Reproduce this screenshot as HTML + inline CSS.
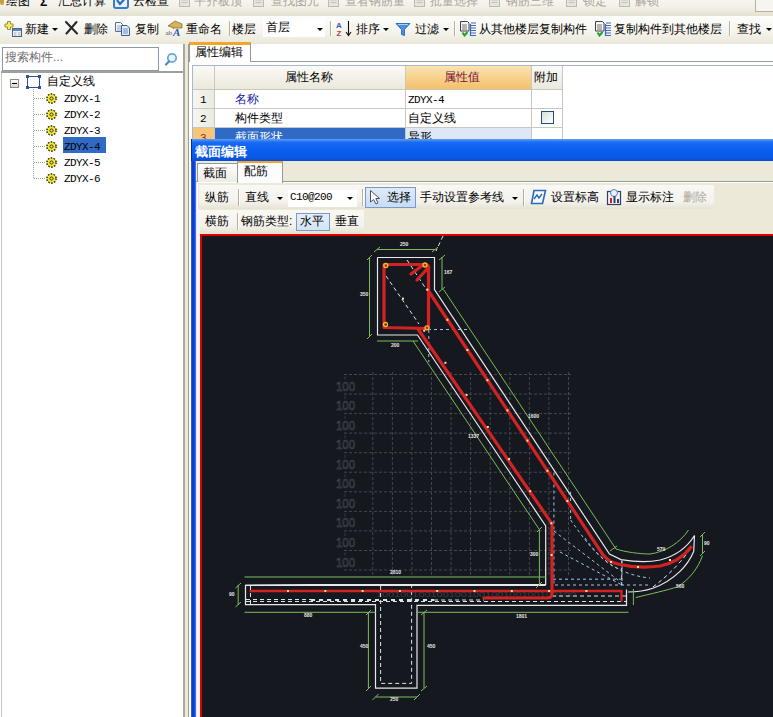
<!DOCTYPE html>
<html><head><meta charset="utf-8">
<style>
*{margin:0;padding:0;box-sizing:border-box}
html,body{width:773px;height:717px;overflow:hidden;background:#ece9d8;font-family:"Liberation Sans",sans-serif;font-size:12px;color:#000;position:relative}
.a{position:absolute;white-space:nowrap;line-height:12px}
.g{color:#a8a69a}
.m{font-family:"Liberation Mono",monospace;font-size:11px;letter-spacing:-0.6px}
.sep{position:absolute;width:2px;background:#b4b1a2;border-right:1px solid #fff}
.arr{position:absolute;width:0;height:0;border-left:3px solid transparent;border-right:3px solid transparent;border-top:3px solid #000}
#top1{left:0;top:0;width:773px;height:16px;background:linear-gradient(#f6f5ee 0,#f1efe6 50%,#e4e1d0 100%)}
#tb{left:0;top:16px;width:773px;height:28px;background:linear-gradient(#fdfdfb,#f6f5ef 50%,#ebe8d9)}
#left{left:0;top:44px;width:185px;height:673px;background:#fff;border-right:2px solid #aaa89c}
#right{left:188px;top:44px;width:585px;height:673px;background:#fff;border-left:1px solid #9d9d92}
</style></head>
<body>
<!-- top strip -->
<div id="top1" class="a"></div>
<div class="a" style="left:0;top:-5px;width:4px;height:10px;background:#c8a040;border-radius:2px"></div>
<div class="a" style="left:6px;top:-5px">绘图</div>
<div class="a" style="left:40px;top:-4px;font-weight:bold">Σ</div>
<div class="a" style="left:58px;top:-5px">汇总计算</div>
<svg class="a" style="left:113px;top:-6px" width="17" height="16" viewBox="0 0 17 16"><rect x="1" y="1" width="14" height="13" rx="2" fill="#e8f2fc" stroke="#3a7ccc" stroke-width="2"/><path d="M4,6 L7,10 L15,1" stroke="#2a6cc0" stroke-width="2.2" fill="none"/></svg>
<div class="a" style="left:133px;top:-5px">云检查</div>
<svg class="a" style="left:178px;top:-5px" width="14" height="13" viewBox="0 0 14 13"><rect x="1.5" y="1.5" width="10" height="10" fill="#e6e4dc" stroke="#bcbab0"/><path d="M3.5,5 h6 M3.5,7.5 h6" stroke="#c4c2b8"/></svg>
<div class="a g" style="left:194px;top:-5px">平齐板顶</div>
<svg class="a" style="left:252px;top:-5px" width="14" height="13" viewBox="0 0 14 13"><rect x="1.5" y="1.5" width="10" height="10" fill="#e6e4dc" stroke="#bcbab0"/><path d="M3.5,5 h6 M3.5,7.5 h6" stroke="#c4c2b8"/></svg>
<div class="a g" style="left:271px;top:-5px">查找图元</div>
<svg class="a" style="left:327px;top:-5px" width="14" height="13" viewBox="0 0 14 13"><rect x="1.5" y="1.5" width="10" height="10" fill="#e6e4dc" stroke="#bcbab0"/><path d="M3.5,5 h6 M3.5,7.5 h6" stroke="#c4c2b8"/></svg>
<div class="a g" style="left:345px;top:-5px">查看钢筋量</div>
<svg class="a" style="left:413px;top:-5px" width="14" height="13" viewBox="0 0 14 13"><rect x="1.5" y="1.5" width="10" height="10" fill="#e6e4dc" stroke="#bcbab0"/><path d="M3.5,5 h6 M3.5,7.5 h6" stroke="#c4c2b8"/></svg>
<div class="a g" style="left:430px;top:-5px">批量选择</div>
<svg class="a" style="left:488px;top:-5px" width="14" height="13" viewBox="0 0 14 13"><rect x="1.5" y="1.5" width="10" height="10" fill="#e6e4dc" stroke="#bcbab0"/><path d="M3.5,5 h6 M3.5,7.5 h6" stroke="#c4c2b8"/></svg>
<div class="a g" style="left:506px;top:-5px">钢筋三维</div>
<svg class="a" style="left:565px;top:-5px" width="14" height="13" viewBox="0 0 14 13"><rect x="1.5" y="1.5" width="10" height="10" fill="#e6e4dc" stroke="#bcbab0"/><path d="M3.5,5 h6 M3.5,7.5 h6" stroke="#c4c2b8"/></svg>
<div class="a g" style="left:583px;top:-5px">锁定</div>
<svg class="a" style="left:618px;top:-5px" width="14" height="13" viewBox="0 0 14 13"><rect x="1.5" y="1.5" width="10" height="10" fill="#e6e4dc" stroke="#bcbab0"/><path d="M3.5,5 h6 M3.5,7.5 h6" stroke="#c4c2b8"/></svg>
<div class="a g" style="left:635px;top:-5px">解锁</div>
<div class="a" style="left:755px;top:-2px;width:20px;height:14px;border:1px solid #b5b2a2;background:#f6f5f0"></div>

<!-- toolbar -->
<div id="tb" class="a"></div>
<svg class="a" style="left:4px;top:20px" width="18" height="18" viewBox="0 0 18 18">
<path d="M3.5,1.5 h3 v2.5 h2.5 v3 h-2.5 v2.5 h-3 v-2.5 h-2.5 v-3 h2.5 z" fill="#f4ec70" stroke="#9c9030" stroke-width="1"/>
<rect x="8.5" y="8.5" width="9" height="8" fill="#f2f4f8" stroke="#50627e" stroke-width="1"/>
<rect x="9" y="9" width="8" height="2" fill="#5a86c8"/>
<path d="M10,13 h2.5 M14,13 h2.5 M10,15 h2.5 M14,15 h2.5" stroke="#a0aabb" stroke-width="1"/>
</svg>
<div class="a" style="left:25px;top:23px">新建</div>
<div class="arr" style="left:52px;top:28px"></div>
<svg class="a" style="left:64px;top:20px" width="16" height="16" viewBox="0 0 16 16"><path d="M2,2 L13,13.5 M12.5,2 L2.5,13.5" stroke="#2a2a2a" stroke-width="2.1" stroke-linecap="round"/></svg>
<div class="a" style="left:84px;top:23px">删除</div>
<svg class="a" style="left:114px;top:21px" width="17" height="15" viewBox="0 0 17 15">
<path d="M1.5,1.5 h5 l2,2 v7 h-7 z" fill="#f6f8fc" stroke="#5a6e94" stroke-width="1"/>
<path d="M3,5 h4 M3,7 h4 M3,9 h4" stroke="#8ea4c8"/>
<path d="M7.5,4.5 h5.5 l2.5,2.5 v7.5 h-8 z" fill="#e4ecf8" stroke="#3a5a94" stroke-width="1"/>
<path d="M9,8 h5 M9,10 h5 M9,12 h5" stroke="#6a8cc8"/>
</svg>
<div class="a" style="left:135px;top:23px">复制</div>
<svg class="a" style="left:165px;top:20px" width="19" height="17" viewBox="0 0 19 17">
<path d="M3,6 L10,1 L17,4 L17,8 L10,8 Z" fill="#d6b45a" stroke="#8a7030" stroke-width="0.8"/>
<path d="M4,5 L9,9" stroke="#b09040"/>
<text x="0.5" y="15" font-family="Liberation Serif" font-size="7" fill="#555">ab</text>
<text x="8" y="16" font-family="Liberation Serif" font-size="11" font-style="italic" font-weight="bold" fill="#2c54b0">A</text>
</svg>
<div class="a" style="left:186px;top:23px">重命名</div>
<div class="sep" style="left:229px;top:21px;height:15px"></div>
<div class="a" style="left:232px;top:23px">楼层</div>
<div class="a" style="left:263px;top:19px;width:62px;height:18px;background:#fff"></div>
<div class="a" style="left:266px;top:21px">首层</div>
<div class="arr" style="left:317px;top:28px"></div>
<div class="sep" style="left:330px;top:21px;height:15px"></div>
<svg class="a" style="left:335px;top:20px" width="17" height="17" viewBox="0 0 17 17">
<text x="1" y="7.5" font-family="Liberation Sans" font-size="8" font-weight="bold" fill="#3a62b0">A</text>
<text x="1.5" y="16" font-family="Liberation Sans" font-size="8" font-weight="bold" fill="#b04848">Z</text>
<path d="M13.5,1 V15 M11,12 L13.5,15.5 L16,12" stroke="#111" stroke-width="1.1" fill="none"/>
</svg>
<div class="a" style="left:356px;top:23px">排序</div>
<div class="arr" style="left:383px;top:28px"></div>
<svg class="a" style="left:395px;top:22px" width="16" height="15" viewBox="0 0 16 15">
<path d="M1,1.5 H15 L9.5,7.5 V13.5 L6.5,12.5 V7.5 Z" fill="#4a90e0" stroke="#2a64b4" stroke-width="0.9"/>
<path d="M3,2.5 H13" stroke="#a8d0f8"/>
</svg>
<div class="a" style="left:415px;top:23px">过滤</div>
<div class="arr" style="left:443px;top:28px"></div>
<div class="sep" style="left:454px;top:21px;height:15px"></div>
<svg class="a" style="left:459px;top:21px" width="18" height="16" viewBox="0 0 18 16">
<path d="M1.5,0.5 h7 l1.5,1.5 v8 h-8.5 z" fill="#f8f8f8" stroke="#404040" stroke-width="1"/>
<path d="M3,4 h5 M3,6 h5 M3,8 h5" stroke="#707070"/>
<path d="M3.5,11.5 L5.5,14.5 L8.5,11" stroke="#20a030" stroke-width="2" fill="none"/>
<path d="M12,2 h5 M11.5,4.5 h5.5 M11.5,7 h5.5 M11.5,9.5 h5.5 M11.5,12 h5.5 M11.5,14.5 h5.5 M11.5,3 V15" stroke="#3a68c0" stroke-width="1.2"/>
</svg>
<div class="a" style="left:479px;top:23px">从其他楼层复制构件</div>
<svg class="a" style="left:594px;top:21px" width="18" height="16" viewBox="0 0 18 16">
<path d="M1.5,0.5 h7 l1.5,1.5 v8 h-8.5 z" fill="#f8f8f8" stroke="#404040" stroke-width="1"/>
<path d="M3,4 h5 M3,6 h5 M3,8 h5" stroke="#707070"/>
<path d="M3.5,11.5 L5.5,14.5 L8.5,11" stroke="#20a030" stroke-width="2" fill="none"/>
<path d="M12,2 h5 M11.5,4.5 h5.5 M11.5,7 h5.5 M11.5,9.5 h5.5 M11.5,12 h5.5 M11.5,14.5 h5.5 M11.5,3 V15" stroke="#3a68c0" stroke-width="1.2"/>
</svg>
<div class="a" style="left:614px;top:23px">复制构件到其他楼层</div>
<div class="sep" style="left:729px;top:21px;height:15px"></div>
<div class="a" style="left:737px;top:23px">查找</div>
<div class="arr" style="left:766px;top:28px"></div>

<!-- left panel -->
<div id="left" class="a"></div>
<div class="a" style="left:2px;top:47px;width:157px;height:24px;border:1px solid #8a98a8;background:#fff"></div>
<div class="a" style="left:5px;top:51px;color:#707070">搜索构件...</div>
<div class="a" style="left:1px;top:71px;width:182px;height:2px;background:#a0a09a"></div>
<div class="a" style="left:1px;top:73px;width:1px;height:644px;background:#c8c8c0"></div>
<svg class="a" style="left:163px;top:51px" width="16" height="16" viewBox="0 0 16 16">
<circle cx="9" cy="7" r="4.2" fill="#e8f4fc" stroke="#6aa6d8" stroke-width="1.8"/>
<path d="M6,10.5 L3,13.5" stroke="#4a88c0" stroke-width="2.2" stroke-linecap="round"/>
</svg>
<!-- tree -->
<div class="a" style="left:10px;top:79px;width:9px;height:9px;border:1px solid #8c8c8c;background:linear-gradient(#fff,#d8d8d0)"></div>
<div class="a" style="left:12px;top:83px;width:5px;height:1px;background:#000"></div>
<div class="a" style="left:27px;top:76px;width:13px;height:12px;border:1px solid #3050a0"></div>
<div class="a" style="left:26px;top:75px;width:3px;height:3px;background:#3050a0"></div>
<div class="a" style="left:38px;top:75px;width:3px;height:3px;background:#3050a0"></div>
<div class="a" style="left:26px;top:86px;width:3px;height:3px;background:#3050a0"></div>
<div class="a" style="left:38px;top:86px;width:3px;height:3px;background:#3050a0"></div>
<div class="a" style="left:47px;top:75px">自定义线</div>
<div class="a" style="left:33px;top:89px;width:1px;height:89px;border-left:1px dotted #a0a0a0"></div>
<div class="a" style="left:34px;top:98px;width:11px;height:1px;border-top:1px dotted #a0a0a0"></div>
<svg class="a" style="left:45px;top:92px" width="13" height="13" viewBox="0 0 13 13"><circle cx="6.5" cy="6.5" r="4.6" fill="#f4e838" stroke="#3a3a10" stroke-width="1.6" stroke-dasharray="1.6 1.3"/><circle cx="6.5" cy="6.5" r="3.3" fill="#f4e838"/><circle cx="6.5" cy="6.5" r="1.6" fill="none" stroke="#3a3a10" stroke-width="1"/></svg>
<div class="a m" style="left:64px;top:93px;">ZDYX-1</div>
<div class="a" style="left:34px;top:114px;width:11px;height:1px;border-top:1px dotted #a0a0a0"></div>
<svg class="a" style="left:45px;top:108px" width="13" height="13" viewBox="0 0 13 13"><circle cx="6.5" cy="6.5" r="4.6" fill="#f4e838" stroke="#3a3a10" stroke-width="1.6" stroke-dasharray="1.6 1.3"/><circle cx="6.5" cy="6.5" r="3.3" fill="#f4e838"/><circle cx="6.5" cy="6.5" r="1.6" fill="none" stroke="#3a3a10" stroke-width="1"/></svg>
<div class="a m" style="left:64px;top:109px;">ZDYX-2</div>
<div class="a" style="left:34px;top:130px;width:11px;height:1px;border-top:1px dotted #a0a0a0"></div>
<svg class="a" style="left:45px;top:124px" width="13" height="13" viewBox="0 0 13 13"><circle cx="6.5" cy="6.5" r="4.6" fill="#f4e838" stroke="#3a3a10" stroke-width="1.6" stroke-dasharray="1.6 1.3"/><circle cx="6.5" cy="6.5" r="3.3" fill="#f4e838"/><circle cx="6.5" cy="6.5" r="1.6" fill="none" stroke="#3a3a10" stroke-width="1"/></svg>
<div class="a m" style="left:64px;top:125px;">ZDYX-3</div>
<div class="a" style="left:34px;top:146px;width:11px;height:1px;border-top:1px dotted #a0a0a0"></div>
<svg class="a" style="left:45px;top:140px" width="13" height="13" viewBox="0 0 13 13"><circle cx="6.5" cy="6.5" r="4.6" fill="#f4e838" stroke="#3a3a10" stroke-width="1.6" stroke-dasharray="1.6 1.3"/><circle cx="6.5" cy="6.5" r="3.3" fill="#f4e838"/><circle cx="6.5" cy="6.5" r="1.6" fill="none" stroke="#3a3a10" stroke-width="1"/></svg>
<div class="a" style="left:63px;top:137px;width:43px;height:16px;background:#316ac5"></div>
<div class="a m" style="left:64px;top:141px;">ZDYX-4</div>
<div class="a" style="left:34px;top:162px;width:11px;height:1px;border-top:1px dotted #a0a0a0"></div>
<svg class="a" style="left:45px;top:156px" width="13" height="13" viewBox="0 0 13 13"><circle cx="6.5" cy="6.5" r="4.6" fill="#f4e838" stroke="#3a3a10" stroke-width="1.6" stroke-dasharray="1.6 1.3"/><circle cx="6.5" cy="6.5" r="3.3" fill="#f4e838"/><circle cx="6.5" cy="6.5" r="1.6" fill="none" stroke="#3a3a10" stroke-width="1"/></svg>
<div class="a m" style="left:64px;top:157px;">ZDYX-5</div>
<div class="a" style="left:34px;top:178px;width:11px;height:1px;border-top:1px dotted #a0a0a0"></div>
<svg class="a" style="left:45px;top:172px" width="13" height="13" viewBox="0 0 13 13"><circle cx="6.5" cy="6.5" r="4.6" fill="#f4e838" stroke="#3a3a10" stroke-width="1.6" stroke-dasharray="1.6 1.3"/><circle cx="6.5" cy="6.5" r="3.3" fill="#f4e838"/><circle cx="6.5" cy="6.5" r="1.6" fill="none" stroke="#3a3a10" stroke-width="1"/></svg>
<div class="a m" style="left:64px;top:173px;">ZDYX-6</div>

<!-- right panel -->
<div id="right" class="a"></div>
<div class="a" style="left:251px;top:61px;width:522px;height:1px;background:#919b9c"></div>
<div class="a" style="left:189px;top:42px;width:62px;height:20px;background:#fff;border:1px solid #919b9c;border-bottom:none;border-top:3px solid #f2a52a"></div>
<div class="a" style="left:195px;top:46px">属性编辑</div>
<!-- table -->
<div class="a" style="left:562px;top:65px;width:211px;height:1px;background:#a4b4c8"></div>
<div class="a" style="left:192px;top:65px;width:371px;height:80px;border:1px solid #a8b8d0;background:#fff"></div>
<div class="a" style="left:193px;top:66px;width:212px;height:23px;background:linear-gradient(#fbfaf6,#ebe9dc)"></div>
<div class="a" style="left:405px;top:66px;width:126px;height:23px;background:linear-gradient(#fbe3b4,#f4c06a)"></div>
<div class="a" style="left:531px;top:66px;width:31px;height:23px;background:linear-gradient(#fbfaf6,#ebe9dc)"></div>
<div class="a" style="left:193px;top:89px;width:21px;height:50px;background:linear-gradient(90deg,#f6f5ef,#ecebe2)"></div>
<div class="a" style="left:193px;top:128px;width:21px;height:12px;background:#f7c57a"></div>
<div class="a" style="left:214px;top:128px;width:191px;height:12px;background:#316ac5"></div>
<div class="a" style="left:405px;top:128px;width:126px;height:12px;background:#dde8f4"></div>
<!-- grid lines -->
<div class="a" style="left:214px;top:66px;width:1px;height:74px;background:#c8c8c0"></div>
<div class="a" style="left:405px;top:66px;width:1px;height:74px;background:#c8c8c0"></div>
<div class="a" style="left:531px;top:66px;width:1px;height:74px;background:#c8c8c0"></div>
<div class="a" style="left:562px;top:66px;width:1px;height:74px;background:#c8c8c0"></div>
<div class="a" style="left:193px;top:89px;width:369px;height:1px;background:#c8c8c0"></div>
<div class="a" style="left:193px;top:108px;width:369px;height:1px;background:#c8c8c0"></div>
<div class="a" style="left:193px;top:127px;width:369px;height:1px;background:#c8c8c0"></div>
<div class="a" style="left:285px;top:71px">属性名称</div>
<div class="a" style="left:444px;top:71px;color:#78103a">属性值</div>
<div class="a" style="left:534px;top:71px">附加</div>
<div class="a m" style="left:200px;top:94px">1</div>
<div class="a m" style="left:200px;top:113px">2</div>
<div class="a m" style="left:200px;top:132px;color:#a02020">3</div>
<div class="a" style="left:235px;top:93px;color:#1a1aa0">名称</div>
<div class="a" style="left:235px;top:112px">构件类型</div>
<div class="a" style="left:235px;top:131px;color:#fff">截面形状</div>
<div class="a m" style="left:408px;top:94px">ZDYX-4</div>
<div class="a" style="left:408px;top:112px">自定义线</div>
<div class="a" style="left:408px;top:131px">异形</div>
<div class="a" style="left:541px;top:111px;width:13px;height:13px;border:1px solid #1c5180;background:linear-gradient(135deg,#dcdcd6,#fff)"></div>

<!-- dialog -->

<div class="a" style="left:191px;top:139px;width:600px;height:600px;background:#0c4ed6;border-left:1px solid #0030a0"></div>
<div class="a" style="left:192px;top:139px;width:600px;height:22px;background:linear-gradient(#5aa0fc 0,#1a6af2 15%,#0a5ef0 50%,#0858e4 85%,#0a4cd0 100%)"></div>
<div class="a" style="left:191px;top:161px;width:5px;height:560px;background:linear-gradient(90deg,#3a6ee0,#0838c8 35%,#0a42d8 65%,#4a86f2)"></div>
<div class="a" style="left:195px;top:145px;color:#fff;font-weight:bold;font-size:13px;line-height:13px">截面编辑</div>
<div class="a" style="left:196px;top:161px;width:580px;height:560px;background:#ece9d8"></div>
<div class="a" style="left:196px;top:181px;width:580px;height:1px;background:#919b9c"></div>
<div class="a" style="left:197px;top:182px;width:580px;height:540px;background:#ece9d8;border-top:1px solid #fff;border-left:1px solid #fff"></div>
<div class="a" style="left:197px;top:163px;width:41px;height:19px;background:linear-gradient(#fff,#ecebe5);border:1px solid #919b9c;border-bottom:none"></div>
<div class="a" style="left:203px;top:167px">截面</div>
<div class="a" style="left:237px;top:161px;width:46px;height:22px;background:#fcfcfe;border:1px solid #919b9c;border-bottom:none;border-top:2px solid #f2a52a"></div>
<div class="a" style="left:244px;top:165px">配筋</div>
<!-- toolbar rows -->
<div class="a" style="left:199px;top:185px;width:515px;height:24px;background:linear-gradient(#f9f8f4,#f3f2ec 70%,#e6e3d4)"></div>
<div class="a" style="left:199px;top:210px;width:165px;height:23px;background:linear-gradient(#f9f8f4,#f3f2ec 70%,#e6e3d4)"></div>
<div class="a" style="left:205px;top:191px">纵筋</div>
<div class="sep" style="left:238px;top:189px;height:17px"></div>
<div class="a" style="left:245px;top:191px">直线</div>
<div class="arr" style="left:277px;top:197px"></div>
<div class="a" style="left:288px;top:190px;width:69px;height:17px;background:#fff"></div>
<div class="a m" style="left:290px;top:191px">C10@200</div>
<div class="arr" style="left:347px;top:197px"></div>
<div class="sep" style="left:362px;top:189px;height:17px"></div>
<div class="a" style="left:365px;top:187px;width:51px;height:21px;background:linear-gradient(#dfeaf8,#c8dcf4);border:1px solid #7a98c8"></div>
<svg class="a" style="left:369px;top:189px" width="12" height="16" viewBox="0 0 12 16"><path d="M1.5 1.5 L1.5 13 L4.5 10.5 L7 15 L9 14 L6.8 9.5 L10.5 9.5 Z" fill="#fff" stroke="#4a5060" stroke-width="1"/></svg>
<div class="a" style="left:387px;top:191px">选择</div>
<div class="a" style="left:420px;top:191px">手动设置参考线</div>
<div class="arr" style="left:512px;top:197px"></div>
<div class="sep" style="left:523px;top:189px;height:17px"></div>
<svg class="a" style="left:530px;top:189px" width="17" height="16" viewBox="0 0 17 16"><path d="M4 1.5 H15.5 L12.5 14.5 H1.5 Z" fill="#f4f8fc" stroke="#2a6ab8" stroke-width="1.6"/><path d="M4 10 L7 6 L9 9 L12 5" fill="none" stroke="#2a6ab8" stroke-width="1.4"/></svg>
<div a class="a" style="left:551px;top:191px">设置标高</div>
<svg class="a" style="left:606px;top:188px" width="16" height="18" viewBox="0 0 16 18"><rect x="1.5" y="3.5" width="13" height="13" fill="#f0f4f8" stroke="#304060" stroke-width="1.2"/><circle cx="8" cy="5" r="3.5" fill="#e8f0ff" stroke="#6080b0"/><rect x="4" y="10" width="2" height="5" fill="#d02020"/><rect x="7.5" y="8" width="2" height="7" fill="#304060"/><rect x="11" y="11" width="2" height="4" fill="#304060"/></svg>
<div class="a" style="left:626px;top:191px">显示标注</div>
<div class="a g" style="left:683px;top:191px">删除</div>
<div class="a" style="left:205px;top:215px">横筋</div>
<div class="sep" style="left:237px;top:213px;height:17px"></div>
<div class="a" style="left:241px;top:215px">钢筋类型:</div>
<div class="a" style="left:296px;top:213px;width:34px;height:18px;background:linear-gradient(#e4eef8,#d4e4f6);border:1px solid #7a98c8"></div>
<div class="a" style="left:300px;top:215px">水平</div>
<div class="a" style="left:335px;top:215px">垂直</div>
<!-- canvas -->
<div class="a" style="left:197px;top:209px;width:3px;height:510px;background:#f6f6f4"></div>
<div class="a" style="left:200px;top:234px;width:580px;height:490px;background:#e00000"></div>
<div class="a" style="left:202px;top:236px;width:580px;height:490px;background:#15181f"></div>
<!--CAD--><svg class="a" style="left:0;top:0" width="773" height="717" viewBox="0 0 773 717">
<defs><clipPath id="cv"><rect x="202" y="236" width="571" height="481"/></clipPath></defs>
<g clip-path="url(#cv)">
<g stroke="#45454d" stroke-width="1" stroke-dasharray="3 2"><line x1="344" y1="374.5" x2="571" y2="374.5"/><line x1="344" y1="394.1" x2="571" y2="394.1"/><line x1="344" y1="413.6" x2="571" y2="413.6"/><line x1="344" y1="433.1" x2="571" y2="433.1"/><line x1="344" y1="452.7" x2="571" y2="452.7"/><line x1="344" y1="472.2" x2="571" y2="472.2"/><line x1="344" y1="491.8" x2="571" y2="491.8"/><line x1="344" y1="511.4" x2="571" y2="511.4"/><line x1="344" y1="530.9" x2="571" y2="530.9"/><line x1="344" y1="550.5" x2="571" y2="550.5"/><line x1="344" y1="570.0" x2="571" y2="570.0"/><line x1="372.8" y1="372" x2="372.8" y2="576"/><line x1="392.4" y1="372" x2="392.4" y2="576"/><line x1="411.9" y1="372" x2="411.9" y2="576"/><line x1="431.5" y1="372" x2="431.5" y2="576"/><line x1="451.1" y1="372" x2="451.1" y2="576"/><line x1="470.6" y1="372" x2="470.6" y2="576"/><line x1="490.2" y1="372" x2="490.2" y2="576"/><line x1="509.8" y1="372" x2="509.8" y2="576"/><line x1="529.4" y1="372" x2="529.4" y2="576"/><line x1="548.9" y1="372" x2="548.9" y2="576"/><line x1="568.5" y1="372" x2="568.5" y2="576"/></g>
<g fill="none" stroke="#505058" stroke-width="0.55" font-family="Liberation Sans" font-size="13.5"><text x="336" y="390.5" textLength="19" lengthAdjust="spacingAndGlyphs">100</text><line x1="345" y1="376.5" x2="345" y2="379.5" stroke="#55555c"/><text x="336" y="410.1" textLength="19" lengthAdjust="spacingAndGlyphs">100</text><line x1="345" y1="396.1" x2="345" y2="399.1" stroke="#55555c"/><text x="336" y="429.6" textLength="19" lengthAdjust="spacingAndGlyphs">100</text><line x1="345" y1="415.6" x2="345" y2="418.6" stroke="#55555c"/><text x="336" y="449.1" textLength="19" lengthAdjust="spacingAndGlyphs">100</text><line x1="345" y1="435.1" x2="345" y2="438.1" stroke="#55555c"/><text x="336" y="468.7" textLength="19" lengthAdjust="spacingAndGlyphs">100</text><line x1="345" y1="454.7" x2="345" y2="457.7" stroke="#55555c"/><text x="336" y="488.2" textLength="19" lengthAdjust="spacingAndGlyphs">100</text><line x1="345" y1="474.2" x2="345" y2="477.2" stroke="#55555c"/><text x="336" y="507.8" textLength="19" lengthAdjust="spacingAndGlyphs">100</text><line x1="345" y1="493.8" x2="345" y2="496.8" stroke="#55555c"/><text x="336" y="527.4" textLength="19" lengthAdjust="spacingAndGlyphs">100</text><line x1="345" y1="513.4" x2="345" y2="516.4" stroke="#55555c"/><text x="336" y="546.9" textLength="19" lengthAdjust="spacingAndGlyphs">100</text><line x1="345" y1="532.9" x2="345" y2="535.9" stroke="#55555c"/><text x="336" y="566.5" textLength="19" lengthAdjust="spacingAndGlyphs">100</text><line x1="345" y1="552.5" x2="345" y2="555.5" stroke="#55555c"/></g>
<text x="376" y="597" fill="#3c3c44" font-family="Liberation Sans" font-size="7" textLength="200" lengthAdjust="spacingAndGlyphs">100100100100100100100100100100100</text>
<path stroke="#e8e8e8" stroke-width="1.2" fill="none" d="M377.5,257.5 H434.5 V289.5 L609.5,554 L621,559.6 C636,562 650,562 660,560 C676,556 688,546 694.5,535.5 L693.7,551.4 C688,565 675,580 652.8,588.3 C645,591 638,592 628,592"/>
<path stroke="#e8e8e8" stroke-width="1.2" fill="none" d="M377.5,257.5 V335 H417.5 L545.7,525.9 V584.5 H311 L245.5,585.3 V604.6 H375.5 V688.2 H417 V605.3 H626.5 V589.5"/>
<path stroke="#e8e8e8" stroke-width="1.2" fill="none" d="M245.5,585.3 H545.7" />
<path stroke="#7cbc5c" stroke-width="1" fill="none" d="M377,249.5 H435 M369.5,257 V336 M442,257 V289.5 M443.5,289.5 L616,549 C625,552 640,554 650,554 C665,552 680,543 688.5,530 M702.5,534.8 V553.4 M377,341 H418 M413,341 L539,529 M539.4,529 V585 M244.5,577 H546 M238.2,585 V605 M244.5,612.3 H375.5 M417,612.3 H628.5 M368.4,612 V688 M424,612 V688 M375.5,697 H417 M635.7,597.6 C650,594 668,590 677.6,586.8 C690,579 698,568 702.5,555.7 M633.4,589 V605"/>
<path stroke="#7cbc5c" stroke-width="1" fill="none" d="M374,252 L380,247 M432,252 L438,247 M367,260 L372,255 M367,339 L372,334 M439,260 L445,255 M439,292 L445,287 M235.5,588 L241,583 M235.5,607 L241,602 M366,615 L371,610 M366,691 L371,686 M421,615 L427,610 M421,691 L427,686 M372.5,700 L378.5,694 M414,700 L420,694 M700,537 L705,532 M700,556 L705,551 M610,551 L617,546 M537,532 L542,527 M536,588 L542,582"/>
<path stroke="#dde4ec" stroke-width="1" fill="none" stroke-dasharray="4 3" d="M386,276 L419,324 M407,260 L430,295 M443,236 L436,251 M250.5,586 V604 M246,599.5 H311 M380.6,586 V683.4 H411.6 V586 M690,549.5 C684,558 670,575 651,588.3 M621.7,561 V585"/>
<path stroke="#dde4ec" stroke-width="2.2" fill="none" stroke-dasharray="4 4" d="M311,600 H434"/>
<path stroke="#dde4ec" stroke-width="1" fill="none" stroke-dasharray="4 3" d="M434,600 H484 M246,601.5 H626 M552,596 H626"/>
<path stroke="#a4c4e8" stroke-width="1" fill="none" stroke-dasharray="3 3" d="M428,329.5 H470 M428.8,330 V362 M553.9,472.5 V585.5 M570.6,492 V520 M622,560 V585.5 M553.9,531 L622,583 M570.6,520 C590,548 605,565 622,570 M560,552 L622,585 M553,579.2 H622 M555,585 H651 M585,538 C600,560 620,575 650,578"/>
<path stroke="#d22222" stroke-width="3.2" fill="none" stroke-linejoin="round" stroke-linecap="round" d="M384,264.5 H425 Q430,264.5 428.5,270 V328.5 L384,327.5 Z"/>
<path stroke="#d22222" stroke-width="3.2" fill="none" stroke-linejoin="round" stroke-linecap="round" d="M411,274 L423,265 M417,280 L428,268"/>
<path stroke="#d22222" stroke-width="3.2" fill="none" stroke-linejoin="round" stroke-linecap="round" d="M428.5,291 L603.2,555.1 C608,561 612,563 617.8,564 C630,567 645,568 660,566 C675,563 684,556 690.8,547.2"/>
<path stroke="#d22222" stroke-width="3.2" fill="none" stroke-linejoin="round" stroke-linecap="round" d="M418,329 L552,523.8 V594 Q552,598 547,598 H484"/>
<path stroke="#d22222" stroke-width="2.4" fill="none" d="M249.5,591 H621.5 V601.5"/>
<g fill="none" stroke="#f0c030" stroke-width="1.3"><circle cx="385.8" cy="265.5" r="2"/><circle cx="425" cy="265" r="2"/><circle cx="385.5" cy="324.5" r="2"/><circle cx="427" cy="327.8" r="2"/></g>
<g fill="#f8e8a0"><rect x="402.0" y="297.6" width="2" height="2"/><rect x="423.2" y="329.7" width="2" height="2"/><rect x="444.4" y="361.8" width="2" height="2"/><rect x="465.6" y="393.9" width="2" height="2"/><rect x="486.8" y="426.0" width="2" height="2"/><rect x="508.0" y="458.1" width="2" height="2"/><rect x="529.2" y="490.2" width="2" height="2"/><rect x="550.4" y="522.3" width="2" height="2"/><rect x="426.4" y="288.6" width="2" height="2"/><rect x="446.4" y="318.8" width="2" height="2"/><rect x="466.4" y="349.0" width="2" height="2"/><rect x="486.4" y="379.2" width="2" height="2"/><rect x="506.4" y="409.4" width="2" height="2"/><rect x="526.4" y="439.6" width="2" height="2"/><rect x="546.4" y="469.8" width="2" height="2"/><rect x="566.4" y="500.0" width="2" height="2"/><rect x="287.0" y="590.0" width="2" height="2"/><rect x="324.3" y="590.0" width="2" height="2"/><rect x="361.6" y="590.0" width="2" height="2"/><rect x="398.9" y="590.0" width="2" height="2"/><rect x="436.2" y="590.0" width="2" height="2"/><rect x="473.5" y="590.0" width="2" height="2"/><rect x="510.8" y="590.0" width="2" height="2"/><rect x="548.1" y="590.0" width="2" height="2"/><rect x="585.4" y="590.0" width="2" height="2"/><rect x="550.5" y="554.0" width="2" height="2"/><rect x="637.0" y="566.0" width="2" height="2"/><rect x="669.0" y="559.0" width="2" height="2"/><rect x="610.0" y="561.0" width="2" height="2"/></g>
<text x="400" y="246" fill="#e8e8e8" font-family="Liberation Sans" font-size="5" font-weight="bold">250</text>
<text x="360" y="296" fill="#e8e8e8" font-family="Liberation Sans" font-size="5" font-weight="bold">350</text>
<text x="444" y="274" fill="#e8e8e8" font-family="Liberation Sans" font-size="5" font-weight="bold">167</text>
<text x="391" y="347" fill="#e8e8e8" font-family="Liberation Sans" font-size="5" font-weight="bold">200</text>
<text x="468" y="438" fill="#e8e8e8" font-family="Liberation Sans" font-size="5" font-weight="bold">1337</text>
<text x="528" y="418" fill="#e8e8e8" font-family="Liberation Sans" font-size="5" font-weight="bold">1600</text>
<text x="530" y="556" fill="#e8e8e8" font-family="Liberation Sans" font-size="5" font-weight="bold">300</text>
<text x="390" y="574" fill="#e8e8e8" font-family="Liberation Sans" font-size="5" font-weight="bold">2810</text>
<text x="229" y="596" fill="#e8e8e8" font-family="Liberation Sans" font-size="5" font-weight="bold">90</text>
<text x="304" y="617" fill="#e8e8e8" font-family="Liberation Sans" font-size="5" font-weight="bold">880</text>
<text x="516" y="618" fill="#e8e8e8" font-family="Liberation Sans" font-size="5" font-weight="bold">1801</text>
<text x="360" y="648" fill="#e8e8e8" font-family="Liberation Sans" font-size="5" font-weight="bold">450</text>
<text x="427" y="648" fill="#e8e8e8" font-family="Liberation Sans" font-size="5" font-weight="bold">450</text>
<text x="390" y="701" fill="#e8e8e8" font-family="Liberation Sans" font-size="5" font-weight="bold">250</text>
<text x="657" y="551" fill="#e8e8e8" font-family="Liberation Sans" font-size="5" font-weight="bold">579</text>
<text x="704" y="545" fill="#e8e8e8" font-family="Liberation Sans" font-size="5" font-weight="bold">90</text>
<text x="676" y="588" fill="#e8e8e8" font-family="Liberation Sans" font-size="5" font-weight="bold">560</text>
</g></svg><!--/CAD-->

</body></html>
